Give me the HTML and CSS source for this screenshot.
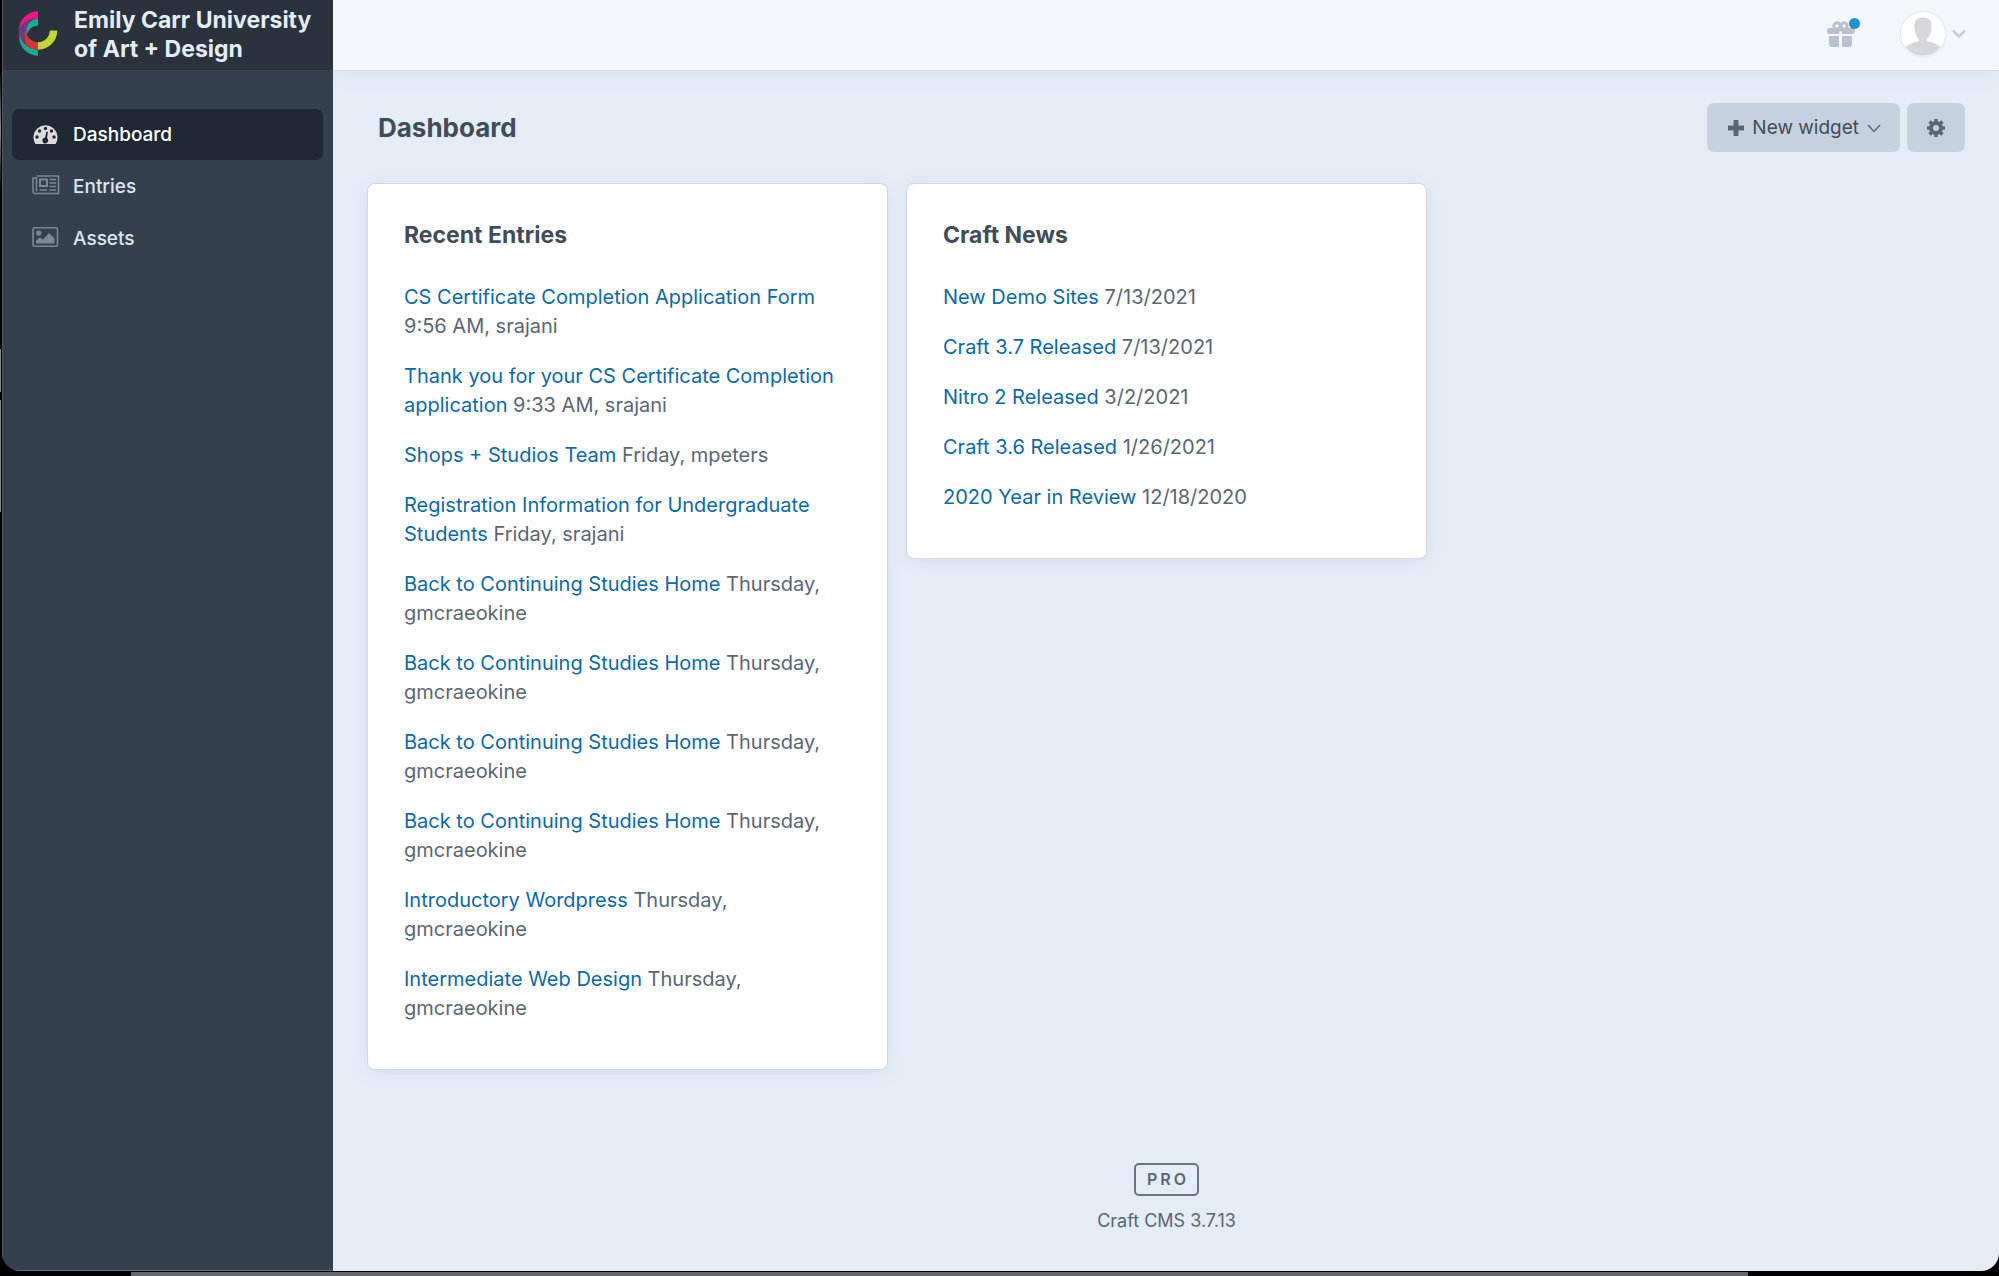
FILE: index.html
```html
<!DOCTYPE html>
<html lang="en">

<head>
    <meta charset="UTF-8">
    <meta name="viewport" content="width=device-width, initial-scale=1.0">
    <title>Dashboard</title>
    <link rel="stylesheet" href="styles.css">
</head>

<body>
    <div id="window">
        <aside id="sidebar">
            <a class="site" href="#">
                <svg class="logo" width="40" height="48" viewBox="0 -2 40 48" fill="none" stroke-width="7.500">
                    <clipPath id="ring">
                        <path d="M20 -1.500A19 19 0 0 0 20 36.500V29A11.500 11.500 0 0 1 20 6Z" />
                    </clipPath>
                    <path d="M20 39A15 15 0 0 1 20 9" stroke="#0bb191" />
                    <path d="M20 2A15.500 15.500 0 0 0 4.500 17.500" stroke="#f7148b" />
                    <path d="M4.500 17.500A15.500 15.500 0 0 0 20 33" stroke="#d6333b" />
                    <path d="M18 39A15 15 0 0 1 18 9" stroke="#6d3a7c" clip-path="url(#ring)" />
                    <path d="M9.500 29A15.500 15.500 0 0 0 20 33" stroke="#d6333b" />
                    <path d="M20 33A15.500 15.500 0 0 0 35.500 17.500" stroke="#c3d62e" />
                </svg>
                <span>Emily Carr University of Art + Design</span>
            </a>
            <nav>
                <ul>
                    <li>
                        <a class="active" href="#">
                            <svg width="28" height="24" viewBox="0 0 28 24">
                                <path d="M3.500 21A12 12 0 1 1 23.500 21Z" fill="#dcdcdc" />
                                <g fill="#1f2933">
                                    <circle cx="5" cy="14" r="1.700" />
                                    <circle cx="7.500" cy="8" r="1.700" />
                                    <circle cx="13.500" cy="5.500" r="1.700" />
                                    <circle cx="19.500" cy="8" r="1.700" />
                                    <circle cx="22" cy="14" r="1.700" />
                                    <path d="M14.500 8.500l1.500.5-1 6a3 3 0 1 1-2-.5z" />
                                </g>
                            </svg>
                            <span>Dashboard</span>
                        </a>
                    </li>
                    <li>
                        <a href="#">
                            <svg width="28" height="24" viewBox="0 0 28 24" fill="none" stroke="#7b8794" stroke-width="1.500">
                                <path d="M4.500 1H26.500V18.500H3A2 2 0 0 1 1 16.500V3H4.500V16.500" />
                                <rect x="8" y="4.500" width="7" height="6.500" stroke-width="2" />
                                <path d="M17.500 4.500H24M17.500 8H24M17.500 11.500H24M7.500 15H15M17.500 15H24" />
                            </svg>
                            <span>Entries</span>
                        </a>
                    </li>
                    <li>
                        <a href="#">
                            <svg width="28" height="24" viewBox="0 0 28 24">
                                <rect x="1" y="0.800" width="24.500" height="18.500" rx="1.500" fill="none" stroke="#7b8794" stroke-width="1.600" />
                                <circle cx="6.800" cy="6" r="2.600" fill="#7b8794" />
                                <path d="M4 16.500V13.500L8 10.500L11 12.500L17 6L22.500 11.500V16.500Z" fill="#7b8794" />
                            </svg>
                            <span>Assets</span>
                        </a>
                    </li>
                </ul>
            </nav>
        </aside>

        <div id="page">
            <header id="topbar">
                <button class="gift" type="button" aria-label="What's new">
                    <svg width="34" height="32" viewBox="0 1 34 32">
                        <g fill="#b8c1cc">
                            <path d="M4 11H26A3 3 0 0 1 26 17H4A3 3 0 0 1 4 11Z" />
                            <path d="M3 19H13V30H6A3 3 0 0 1 3 27Z" />
                            <path d="M16 19H26V27A3 3 0 0 1 23 30H16Z" />
                        </g>
                        <path d="M14.500 14.500V18" stroke="#f3f7fc" stroke-width="3" />
                        <g fill="none" stroke="#b8c1cc" stroke-width="3">
                            <circle cx="11" cy="9" r="3.200" />
                            <circle cx="18" cy="9" r="3.200" />
                        </g>
                        <circle cx="28.500" cy="6.500" r="5.500" fill="#1992d4" />
                    </svg>
                </button>
                <button class="account" type="button" aria-label="My account">
                    <svg class="avatar" width="44" height="44" viewBox="0 0 44 44">
                        <circle cx="22" cy="22" r="22" fill="#fff" />
                        <path d="M22 5.500c6.500 0 9 3.500 8.500 9.500c-.3 6-2 10-4.500 12v2c5 1 9.500 3 13.500 6A22 22 0 0 1 4.500 35c4-3 8.500-5 13.500-6v-2c-2.500-2-4.200-6-4.500-12c-.5-6 2-9.500 8.500-9.500z" fill="#d5d7db" />
                    </svg>
                    <svg width="14" height="10" viewBox="0 0 14 10" fill="none" stroke="#c5ced9" stroke-width="2.500">
                        <path d="M1 1.500L7 7.500L13 1.500" />
                    </svg>
                </button>
            </header>

            <main>
                <div class="heading">
                    <h1>Dashboard</h1>
                    <div class="buttons">
                        <button class="btn" type="button">
                            <svg width="16" height="16" viewBox="0 0 16 16" stroke="#596673" stroke-width="5">
                                <path d="M8 0V16M0 8H16" />
                            </svg>
                            New widget
                            <svg width="14" height="10" viewBox="0 0 14 10" fill="none" stroke="#596673" stroke-width="1.500">
                                <path d="M1 2L7 8.500L13 2" />
                            </svg>
                        </button>
                        <button class="btn settings" type="button" aria-label="Settings">
                            <svg width="18" height="18" viewBox="-9 -9 18 18">
                                <circle r="5" fill="none" stroke="#596673" stroke-width="4" />
                                <path d="M0-9V-6M0 6V9M-9 0H-6M6 0H9M-6.400-6.400L-4.500-4.500M4.500 4.500L6.400 6.400M-6.400 6.400L-4.500 4.500M4.500-4.500L6.400-6.400" stroke="#596673" stroke-width="3.600" />
                            </svg>
                        </button>
                    </div>
                </div>

                <div class="widgets">
                    <section class="widget">
                        <h2>Recent Entries</h2>
                        <ul>
                            <li><a href="#">CS Certificate Completion Application Form</a> <span>9:56 AM, srajani</span></li>
                            <li><a href="#">Thank you for your CS Certificate Completion application</a> <span>9:33 AM, srajani</span></li>
                            <li><a href="#">Shops + Studios Team</a> <span>Friday, mpeters</span></li>
                            <li><a href="#">Registration Information for Undergraduate Students</a> <span>Friday, srajani</span></li>
                            <li><a href="#">Back to Continuing Studies Home</a> <span>Thursday, gmcraeokine</span></li>
                            <li><a href="#">Back to Continuing Studies Home</a> <span>Thursday, gmcraeokine</span></li>
                            <li><a href="#">Back to Continuing Studies Home</a> <span>Thursday, gmcraeokine</span></li>
                            <li><a href="#">Back to Continuing Studies Home</a> <span>Thursday, gmcraeokine</span></li>
                            <li><a href="#">Introductory Wordpress</a> <span>Thursday, gmcraeokine</span></li>
                            <li><a href="#">Intermediate Web Design</a> <span>Thursday, gmcraeokine</span></li>
                        </ul>
                    </section>
                    <section class="widget">
                        <h2>Craft News</h2>
                        <ul>
                            <li><a href="#">New Demo Sites</a> <span>7/13/2021</span></li>
                            <li><a href="#">Craft 3.7 Released</a> <span>7/13/2021</span></li>
                            <li><a href="#">Nitro 2 Released</a> <span>3/2/2021</span></li>
                            <li><a href="#">Craft 3.6 Released</a> <span>1/26/2021</span></li>
                            <li><a href="#">2020 Year in Review</a> <span>12/18/2020</span></li>
                        </ul>
                    </section>
                </div>
            </main>

            <footer>
                <span class="edition">PRO</span>
                <span>Craft CMS 3.7.13</span>
            </footer>
        </div>
    </div>
</body>

</html>
```
FILE: styles.css
```css
* {
    margin: 0;
    padding: 0;
    box-sizing: border-box;
}

/* desktop showing around the window */
body {
    display: flex;
    min-height: 100vh;
    padding: 0 0 5px 2px;
    background:
        linear-gradient(#65696d, #65696d) 131px 100% / 1617px 4px no-repeat,
        linear-gradient(#8c8c8c, #8c8c8c) 0 349px / 1px 43px no-repeat,
        linear-gradient(#8c8c8c, #8c8c8c) 0 400px / 1px 112px no-repeat,
        linear-gradient(#000, #8c8c8c, #000) 0 70px / 1px 120px no-repeat,
        #000;
    font-family: Inter, "Liberation Sans", sans-serif;
    font-size: 20px;
    line-height: 29px;
    color: #596673;
}

ul {
    list-style: none;
}

a {
    color: #0b69a3;
    text-decoration: none;
}

button {
    border: 0;
    background: none;
    font: inherit;
    color: inherit;
    cursor: pointer;
}

#window {
    display: flex;
    flex: 1;
    border-radius: 0 0 18px 18px;
    overflow: hidden;
}

#sidebar {
    position: relative;
    z-index: 1;
    flex: none;
    width: 331px;
    background: #35404e;
    border-left: 1px solid #4d5865;
    border-bottom: 1px solid #68727e;
}

.site {
    display: flex;
    align-items: center;
    gap: 16px;
    height: 70px;
    padding: 0 12px 0 15px;
    background: #29323d;
    color: #e4edf6;
    font-size: 23px;
    font-weight: 700;
}

.logo {
    flex: none;
}

nav {
    padding: 39px 10px 39px 9px;
}

nav ul {
    display: flex;
    flex-direction: column;
    gap: 1px;
}

nav a {
    display: flex;
    align-items: center;
    gap: 13px;
    height: 51px;
    padding: 0 20px;
    border-radius: 7px;
    color: #dbe5f0;
    font-size: 19px;
    font-weight: 500;
}

nav .active {
    background: #1f2933;
    color: #fff;
}

#page {
    display: flex;
    flex-direction: column;
    flex: 1;
    background: #e4ecf6;
}

#topbar {
    display: flex;
    justify-content: flex-end;
    align-items: center;
    gap: 41px;
    height: 71px;
    padding: 0 33px 2px;
    background: #f3f7fc;
    border-bottom: 1px solid #d3dde9;
    box-shadow: 0 2px 16px #d5e1ed;
}

.gift {
    display: flex;
}

.account {
    display: flex;
    align-items: center;
    gap: 7px;
}

.avatar {
    border-radius: 50%;
    box-shadow: 0 0 3px #cdd8e4;
}

main {
    padding: 32px 34px 0 35px;
}

.heading {
    display: flex;
    justify-content: space-between;
    align-items: center;
    padding-left: 10px;
    color: #3f4d5a;
}

h1 {
    font-size: 26px;
    font-weight: 700;
}

.buttons {
    display: flex;
    gap: 7px;
}

.btn {
    display: flex;
    align-items: center;
    gap: 8px;
    height: 49px;
    padding: 0 19px 0 21px;
    border-radius: 7px;
    background: #c5d1de;
    font-size: 19px;
}

.settings {
    padding: 0 20px;
}

.widgets {
    display: grid;
    grid-template-columns: repeat(3, 1fr);
    align-items: start;
    gap: 20px;
    margin-top: 32px;
}

.widget {
    padding: 37px 36px 36px;
    border-radius: 7px;
    background: #fff;
    box-shadow: 0 0 0 1px #cfdae6, 0 3px 16px #d3dfeb;
}

h2 {
    margin-bottom: 33px;
    color: #3f4d5a;
    font-size: 23px;
    font-weight: 700;
}

.widget ul {
    display: flex;
    flex-direction: column;
    gap: 21px;
    padding-bottom: 10px;
}

footer {
    display: flex;
    flex-direction: column;
    align-items: center;
    gap: 10px;
    margin-top: auto;
    padding: 0 34px 36px 35px;
    font-size: 18px;
}

.edition {
    padding: 0 8px 0 11px;
    border: 2px solid #687583;
    border-radius: 5px;
    font-size: 16px;
    font-weight: 600;
    letter-spacing: 3px;
}
```
